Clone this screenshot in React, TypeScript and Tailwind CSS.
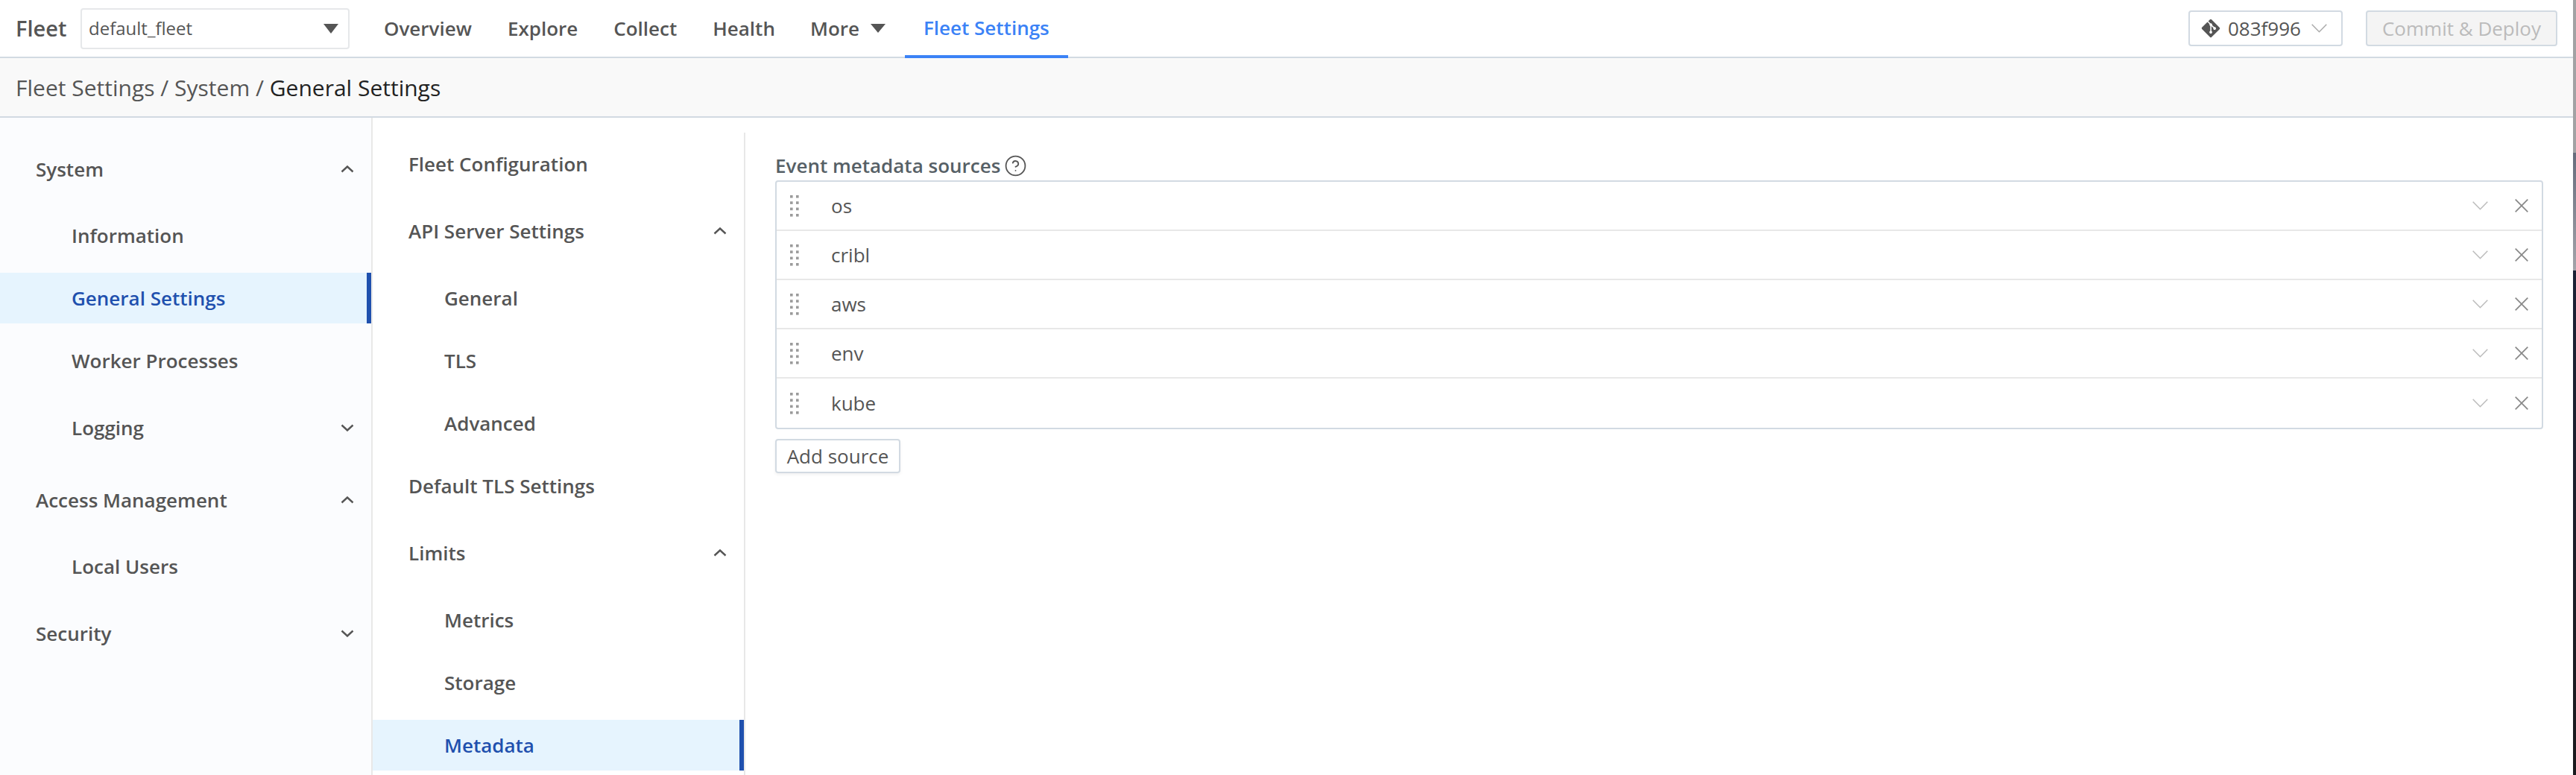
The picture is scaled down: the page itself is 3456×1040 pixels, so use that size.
import { CircleHelp } from "lucide-react"
import { FaGitAlt } from "react-icons/fa"

type NavRowProps = {
  label: string
  className?: string
  sub?: boolean
  active?: boolean
  open?: boolean
}

function Caret({ up }: { up: boolean }) {
  return (
    <svg width="18" height="10" viewBox="0 0 18 10" fill="none" className="shrink-0 text-[#555]">
      <path
        d={up ? "M1.5 8.5 9 1.5l7.5 7" : "M1.5 1.5 9 8.5l7.5-7"}
        stroke="currentColor"
        strokeWidth="2.4"
      />
    </svg>
  )
}

function ThinChevron({ className = "" }: { className?: string }) {
  return (
    <svg width="21" height="12" viewBox="0 0 21 12" fill="none" className={`shrink-0 ${className}`}>
      <path d="M.7.8l9.8 10L20.3.8" stroke="currentColor" strokeWidth="1.5" />
    </svg>
  )
}

function NavRow({ label, className = "", sub, active, open }: NavRowProps) {
  return (
    <div
      className={`flex h-[68px] items-center justify-between pr-[23px] text-[26px] font-semibold ${sub ? "pl-[96px]" : "pl-[48px]"} ${
        active ? "border-r-[6px] border-[#1f50ae] bg-[#e6f4fe] text-[#1f50ae]" : "text-[#555]"
      } ${className}`}
    >
      <span>{label}</span>
      {open !== undefined && <Caret up={open} />}
    </div>
  )
}

function GripDots() {
  const xs = [0, 8]
  const ys = [0, 8.3, 16.6, 25]
  return (
    <svg width="12" height="29" viewBox="0 0 12 29" className="shrink-0 text-[#9b9b9b]">
      {xs.map((x) => ys.map((y) => <rect key={`${x}-${y}`} x={x} y={y} width="3.6" height="3.6" fill="currentColor" />))}
    </svg>
  )
}

const sources = ["os", "cribl", "aws", "env", "kube"]
const navItems = ["Overview", "Explore", "Collect", "Health"]

export default function App() {
  return (
    <div className="flex h-[1040px] w-[3456px] overflow-hidden bg-white font-['Open_Sans',sans-serif] antialiased">
      <div className="flex w-[3452px] shrink-0 flex-col">
        <header className="flex h-[78px] shrink-0 items-center border-b-2 border-[#d2dae2] pl-[21px] text-[26px] text-[#555]">
          <span className="w-[87px] shrink-0 text-[29px] font-semibold">Fleet</span>
          <div className="flex h-[55px] w-[361px] items-center justify-between rounded-[4px] border-2 border-[#e6e8ea] pl-[9px] pr-[13px] text-[24px]">
            <span>default_fleet</span>
            <svg width="20" height="13" viewBox="0 0 20 13" className="text-[#555]">
              <path d="M0 0h20L10 13z" fill="currentColor" />
            </svg>
          </div>
          <nav className="ml-[22px] flex h-full items-stretch font-semibold">
            {navItems.map((item) => (
              <span key={item} className="flex items-center px-[24px]">
                {item}
              </span>
            ))}
            <span className="flex items-center gap-[15px] pl-[23px] pr-[26px]">
              More
              <svg width="20" height="12" viewBox="0 0 20 12" className="text-[#555]">
                <path d="M0 0h20L10 12z" fill="currentColor" />
              </svg>
            </span>
            <span className="relative top-[2px] flex items-center border-b-4 border-[#3b82f6] px-[25px] pb-[2px] text-[#3b82f6]">
              Fleet Settings
            </span>
          </nav>
          <div className="ml-auto flex items-center pr-[21px]">
            <div className="flex h-[48px] w-[207px] items-center rounded-[4px] border-2 border-[#d2dae2] pl-[14px] font-normal">
              <FaGitAlt className="size-[28px] shrink-0 text-[#555]" />
              <span className="ml-[9px]">083f996</span>
              <ThinChevron className="ml-[14px] text-[#aaa]" />
            </div>
            <div className="ml-[31px] flex h-[48px] w-[257px] items-center justify-center rounded-[4px] border-2 border-[#d2dae2] bg-[#f4f4f4] text-[#bbb]">
              Commit &amp; Deploy
            </div>
          </div>
        </header>

        <div className="flex h-[80px] shrink-0 items-center border-b-2 border-[#d2dae2] bg-[#f9f9f9] pl-[21px] text-[30px] text-[#555]">
          Fleet Settings / System /&nbsp;<span className="text-[#222]">General Settings</span>
        </div>

        <div className="flex min-h-0 flex-1">
          <aside className="w-[500px] shrink-0 border-r-2 border-[#e8e8e8] bg-[#fbfcfe] pt-[35px]">
            <NavRow label="System" open={true} />
            <NavRow label="Information" sub className="mt-[21px]" />
            <NavRow label="General Settings" sub active className="mt-[16px]" />
            <NavRow label="Worker Processes" sub className="mt-[16px]" />
            <NavRow label="Logging" sub open={false} className="mt-[22px]" />
            <NavRow label="Access Management" open={true} className="mt-[29px]" />
            <NavRow label="Local Users" sub className="mt-[21px]" />
            <NavRow label="Security" open={false} className="mt-[22px]" />
          </aside>

          <aside className="mt-[20px] w-[500px] shrink-0 border-r-2 border-[#e8e8e8] pt-[8px]">
            <NavRow label="Fleet Configuration" />
            <NavRow label="API Server Settings" open={true} className="mt-[22px]" />
            <NavRow label="General" sub className="mt-[22px]" />
            <NavRow label="TLS" sub className="mt-[16px]" />
            <NavRow label="Advanced" sub className="mt-[16px]" />
            <NavRow label="Default TLS Settings" className="mt-[16px]" />
            <NavRow label="Limits" open={true} className="mt-[22px]" />
            <NavRow label="Metrics" sub className="mt-[22px]" />
            <NavRow label="Storage" sub className="mt-[16px]" />
            <NavRow label="Metadata" sub active className="mt-[16px]" />
          </aside>

          <main className="min-w-0 flex-1 pl-[40px] pr-[40px] pt-[45px]">
            <div className="flex h-[39px] items-center gap-[5px] text-[26px] font-semibold text-[#566066]">
              Event metadata sources
              <CircleHelp className="size-[31px] text-[#555]" strokeWidth={1.4} />
            </div>
            <div className="rounded-[4px] border-2 border-[#d2dae2]">
              {sources.map((source, i) => (
                <div
                  key={source}
                  className={`flex h-[66px] items-center pl-[18px] pr-[18px] text-[26px] text-[#555] ${
                    i < sources.length - 1 ? "border-b-2 border-[#e8e8e8]" : ""
                  }`}
                >
                  <GripDots />
                  <span className="ml-[43px] flex-1">{source}</span>
                  <ThinChevron className="text-[#bbb]" />
                  <svg width="18" height="18" viewBox="0 0 18 18" fill="none" className="ml-[36px] shrink-0 text-[#888]">
                    <path d="M.7.7l16.6 16.6M17.3.7.7 17.3" stroke="currentColor" strokeWidth="1.7" />
                  </svg>
                </div>
              ))}
            </div>
            <div className="mt-[13px] flex h-[46px] w-[168px] items-center justify-center rounded-[4px] border-2 border-[#d2dae2] text-[26px] text-[#555] shadow-[0_2px_4px_rgba(0,0,0,0.06)]">
              Add source
            </div>
          </main>
        </div>
      </div>
      <div className="flex w-[4px] shrink-0 flex-col">
        <div className="h-[205px] bg-[#a2a2a4]" />
        <div className="h-[158px] bg-linear-to-b from-[#666c7c] to-[#a4a4aa]" />
        <div className="flex-1 bg-linear-to-b from-[#1b2236] to-[#1a1a1d]" />
      </div>
    </div>
  )
}
